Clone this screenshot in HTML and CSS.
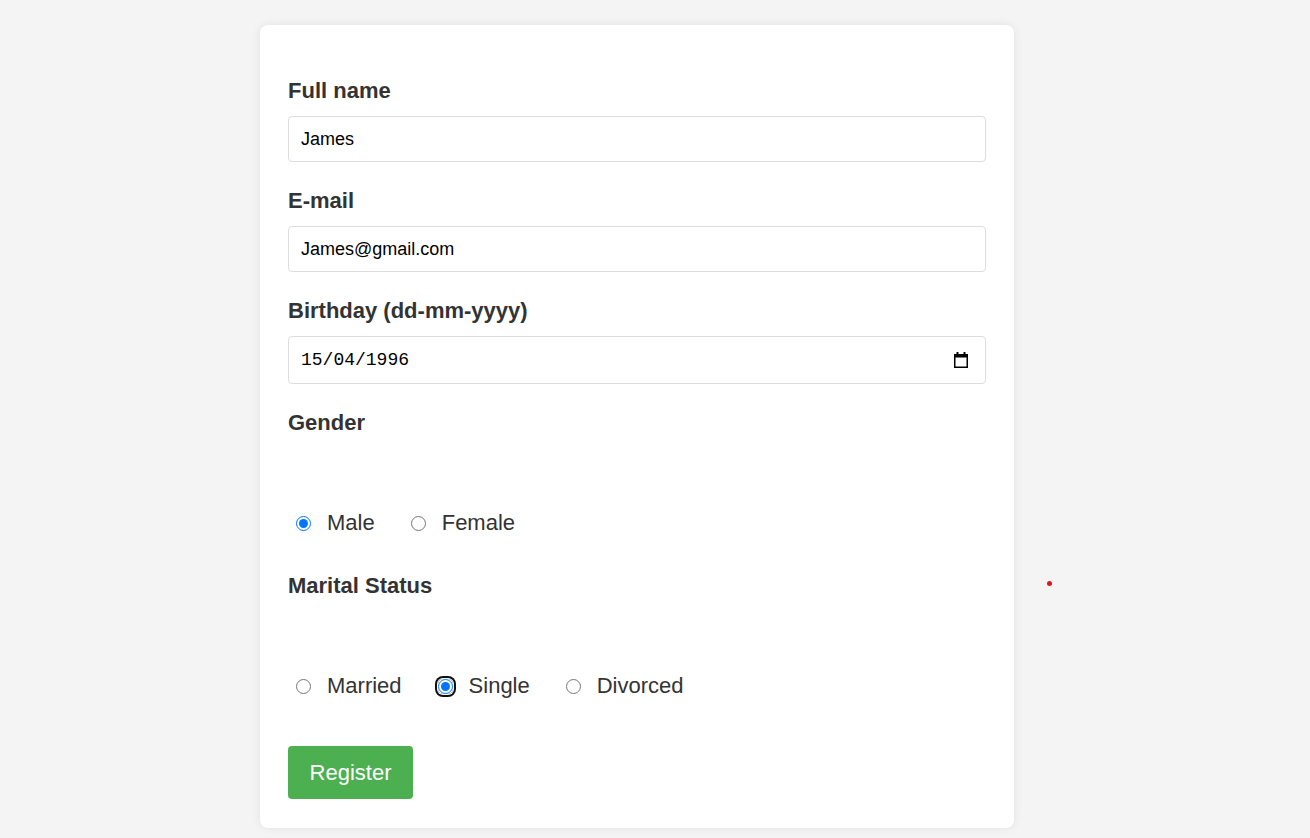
FILE: index.html
```html
<!DOCTYPE html>
<html lang="en">
<head>
<meta charset="utf-8">
<title>Register</title>
<link rel="stylesheet" href="styles.css">
</head>
<body>
<form class="card">
  <label class="field-label" for="name">Full name</label>
  <input class="text-input" id="name" type="text" value="James">

  <label class="field-label" for="email">E-mail</label>
  <input class="text-input" id="email" type="text" value="James@gmail.com">

  <label class="field-label" for="bday">Birthday (dd-mm-yyyy)</label>
  <div class="date-input" id="bday">
    <span class="date-value">15/04/1996</span>
    <svg class="cal-icon" width="14" height="16" viewBox="0 0 14 16" aria-hidden="true">
      <path fill="#000" fill-rule="evenodd" d="M2.5 0h2v2h5V0h2v2H14v14H0V2h2.5zM1.5 5.5v9h11v-9z"/>
    </svg>
  </div>

  <div class="group-label">Gender</div>
  <div class="radio-row">
    <label class="option"><input type="radio" name="gender" checked><span>Male</span></label>
    <label class="option"><input type="radio" name="gender"><span>Female</span></label>
  </div>

  <div class="group-label">Marital Status</div>
  <div class="radio-row">
    <label class="option"><input type="radio" name="status"><span>Married</span></label>
    <label class="option"><span class="focus-ring"><input type="radio" name="status" checked></span><span>Single</span></label>
    <label class="option"><input type="radio" name="status"><span>Divorced</span></label>
  </div>

  <button class="submit" type="button">Register</button>
</form>
<span class="dot"></span>
</body>
</html>
```
FILE: styles.css
```css
html, body {
  margin: 0;
  padding: 0;
}

body {
  background: #f4f4f4;
  font-family: "Liberation Sans", Arial, sans-serif;
  padding-top: 25px;
  height: 813px;
  position: relative;
}

.card {
  box-sizing: border-box;
  width: 754px;
  margin-left: 260px;
  background: #fff;
  border-radius: 8px;
  box-shadow: 0 0 10px rgba(0, 0, 0, 0.08);
  padding: 53px 28px 29px;
  display: flex;
  flex-direction: column;
  align-items: stretch;
}

.field-label,
.group-label {
  display: block;
  font-size: 22px;
  line-height: 26px;
  font-weight: bold;
  color: #333;
}

.field-label {
  margin-bottom: 12px;
}

.text-input {
  box-sizing: border-box;
  height: 46px;
  width: 100%;
  margin: 0 0 26px;
  padding: 1px 12px 0;
  border: 1px solid #ddd;
  border-radius: 4px;
  font-family: "Liberation Sans", Arial, sans-serif;
  font-size: 18px;
  color: #000;
  background: #fff;
  outline: none;
}

.date-input {
  box-sizing: border-box;
  height: 48px;
  margin-bottom: 26px;
  padding: 0 17px 0 12px;
  border: 1px solid #ddd;
  border-radius: 4px;
  display: flex;
  align-items: center;
  justify-content: space-between;
}

.date-value {
  font-family: "Liberation Mono", "DejaVu Sans Mono", monospace;
  font-size: 18px;
  color: #000;
}

.cal-icon {
  display: block;
}

.radio-row {
  display: flex;
  align-items: center;
  height: 26px;
  margin: 74px 0 37px;
}

.radio-row:last-of-type {
  margin-bottom: 47px;
}

.option {
  display: flex;
  align-items: center;
  margin-right: 28px;
  font-size: 22px;
  line-height: 26px;
  color: #333;
}

.option input {
  width: 15px;
  height: 15px;
  margin: 0 16px 0 8px;
}

.focus-ring {
  display: flex;
  margin: 0 16px 0 8px;
  border-radius: 5px;
  box-shadow: 0 0 0 1px #fff, 0 0 0 3px #101010;
}

.focus-ring input {
  margin: 0;
}

.submit {
  align-self: flex-start;
  width: 125px;
  height: 53px;
  background: #4caf50;
  color: #fff;
  border: none;
  border-radius: 4px;
  font-family: "Liberation Sans", Arial, sans-serif;
  font-size: 22px;
  cursor: pointer;
}

.dot {
  position: absolute;
  left: 1047px;
  top: 581px;
  width: 5px;
  height: 5px;
  border-radius: 50%;
  background: #e0141e;
}
```
